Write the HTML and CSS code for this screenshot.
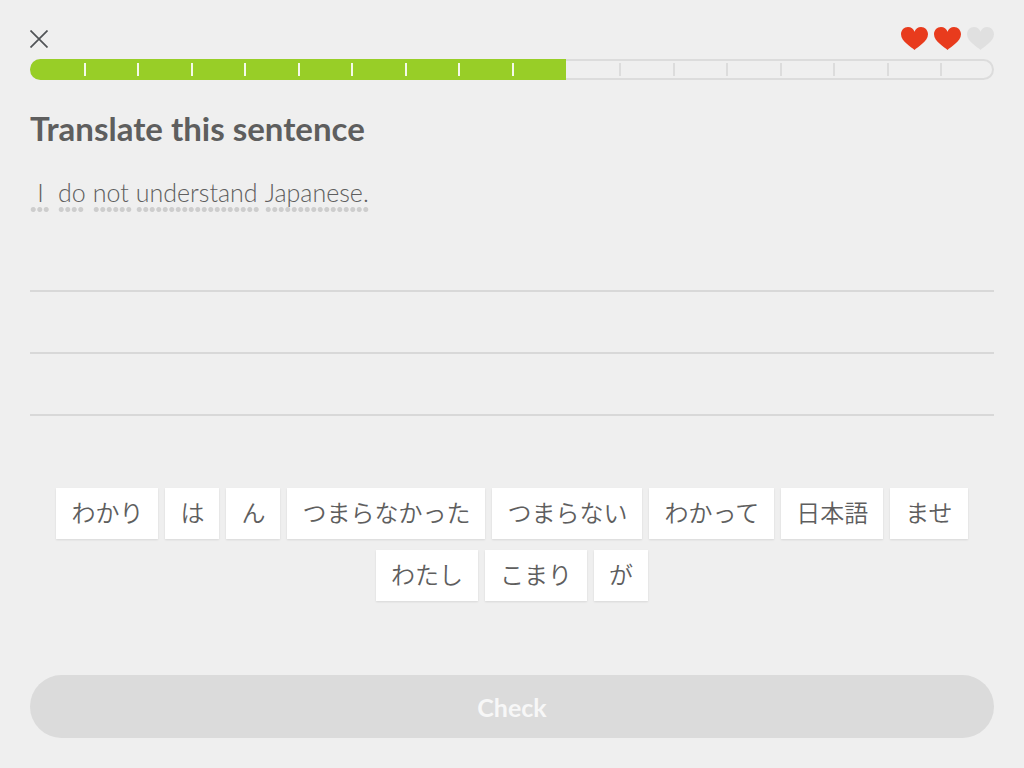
FILE: index.html
```html
<!DOCTYPE html>
<html lang="en">
<head>
<meta charset="utf-8">
<meta name="viewport" content="width=device-width, initial-scale=1">
<title>Translate this sentence</title>
<link rel="stylesheet" href="styles.css">
</head>
<body>
<main class="lesson">
  <header class="top">
    <button class="close" type="button" aria-label="Close">
      <svg width="18" height="18" viewBox="0 0 18 18" aria-hidden="true"><path d="M0.5 0.5 17.5 17.5M17.5 0.5 0.5 17.5"/></svg>
    </button>
    <div class="hearts" role="img" aria-label="2 of 3 hearts left">
      <svg class="heart" viewBox="0 0 27 23"><path d="M13.5 23C11 20.5 0 14.500 0 7.300C0 3.200 3 0 7 0C10 0 12.500 1.800 13.500 4.800C14.500 1.800 17 0 20 0C24 0 27 3.200 27 7.300C27 14.500 16 20.500 13.500 23Z"/></svg>
      <svg class="heart" viewBox="0 0 27 23"><path d="M13.5 23C11 20.5 0 14.500 0 7.300C0 3.200 3 0 7 0C10 0 12.500 1.800 13.500 4.800C14.500 1.800 17 0 20 0C24 0 27 3.200 27 7.300C27 14.500 16 20.500 13.500 23Z"/></svg>
      <svg class="heart heart-lost" viewBox="0 0 27 23"><path d="M13.5 23C11 20.5 0 14.500 0 7.300C0 3.200 3 0 7 0C10 0 12.500 1.800 13.500 4.800C14.500 1.800 17 0 20 0C24 0 27 3.200 27 7.300C27 14.500 16 20.500 13.500 23Z"/></svg>
    </div>
  </header>
  <div class="progress" role="progressbar" aria-label="Lesson progress" aria-valuemin="0" aria-valuemax="18" aria-valuenow="10">
    <i class="step done"></i><i class="step done"></i><i class="step done"></i><i class="step done"></i><i class="step done"></i><i class="step done"></i><i class="step done"></i><i class="step done"></i><i class="step done"></i><i class="step done"></i><i class="step"></i><i class="step"></i><i class="step"></i><i class="step"></i><i class="step"></i><i class="step"></i><i class="step"></i><i class="step"></i>
  </div>
  <h1 class="title">Translate this sentence</h1>
  <p class="sentence">
    <span class="word word-short" style="--dots:3">I</span>
    <span class="word" style="--dots:4">do</span>
    <span class="word" style="--dots:6">not</span>
    <span class="word" style="--dots:19">understand</span>
    <span class="word" style="--dots:16">Japanese.</span>
  </p>
  <div class="answer" role="group" aria-label="Your answer">
    <div class="line"></div>
    <div class="line"></div>
    <div class="line"></div>
  </div>
  <div class="bank" lang="ja">
    <button class="tile" type="button">わかり</button>
    <button class="tile" type="button">は</button>
    <button class="tile" type="button">ん</button>
    <button class="tile" type="button">つまらなかった</button>
    <button class="tile" type="button">つまらない</button>
    <button class="tile" type="button">わかって</button>
    <button class="tile" type="button">日本語</button>
    <button class="tile" type="button">ませ</button>
    <button class="tile" type="button">わたし</button>
    <button class="tile" type="button">こまり</button>
    <button class="tile" type="button">が</button>
  </div>
  <button class="check" type="button">Check</button>
</main>
</body>
</html>
```

FILE: styles.css
```css
* {
  box-sizing: border-box;
}

body {
  margin: 0;
  background: #efefef;
  color: #5e5e5e;
  font-family: Lato, "Noto Sans CJK JP", sans-serif;
}

button {
  margin: 0;
  border: 0;
  font: inherit;
  color: inherit;
}

.lesson {
  display: flex;
  flex-direction: column;
  min-height: 100vh;
  padding: 27px 30px 30px;
}

.top {
  display: flex;
  justify-content: space-between;
  align-items: center;
  height: 23px;
}

.close {
  display: flex;
  padding: 0;
  background: none;
}

.close path {
  fill: none;
  stroke: #505356;
  stroke-width: 1.7;
}

.hearts {
  display: flex;
  gap: 6px;
}

.heart {
  width: 27px;
  height: 23px;
  fill: #e83b1d;
}

.heart-lost {
  fill: #e0e0e0;
}

.progress {
  display: grid;
  grid-template-columns: repeat(18, 1fr);
  height: 21px;
  margin-top: 9px;
  border-radius: 11px;
  overflow: hidden;
  box-shadow: inset 0 0 0 2px #dcdcdc;
}

.step {
  display: flex;
  align-items: center;
}

.step + .step::before {
  content: "";
  width: 2px;
  height: 13px;
  background: #dcdcdc;
}

.done {
  background: #98ce27;
}

.done + .done::before {
  background: #f4f9e8;
}

.done + .step:not(.done)::before {
  background: none;
}

.title {
  margin: 28px 0 0;
  font-size: 33px;
  line-height: 40px;
  font-weight: 700;
}

.sentence {
  display: flex;
  flex-wrap: wrap;
  gap: 7px;
  margin: 30px 0 0;
  font-size: 25px;
  line-height: 28px;
  font-weight: 300;
}

/* The dotted hint line may run slightly past its word. */
.word::after {
  content: "";
  display: block;
  width: calc(var(--dots) * 13px / 2);
  height: 5px;
  margin: 1px -3px 0 0;
  background:
    radial-gradient(circle at 25% 50%, #cdcdcd 2px, transparent 3px),
    radial-gradient(circle at 75% 50%, #cdcdcd 2px, transparent 3px);
  background-size: 13px 5px;
}

.word-short {
  min-width: 21px;
  text-align: center;
}

.answer {
  margin-top: 18px;
}

.line {
  height: 62px;
  border-bottom: 2px solid #d8d8d8;
}

.bank {
  display: flex;
  flex-wrap: wrap;
  justify-content: center;
  gap: 11px 7px;
  margin: 72px 0 32px;
}

.tile {
  padding: 6px 15px 9px;
  background: #fff;
  box-shadow: 0 1px 2px rgba(0, 0, 0, 0.1);
  font-family: "Noto Sans CJK JP", sans-serif;
  font-size: 24px;
  line-height: 36px;
  font-weight: 350;
}

.check {
  height: 63px;
  margin-top: auto;
  border-radius: 32px;
  background: #dbdbdb;
  color: #f7f7f7;
  font-size: 25px;
  font-weight: 700;
}
```
